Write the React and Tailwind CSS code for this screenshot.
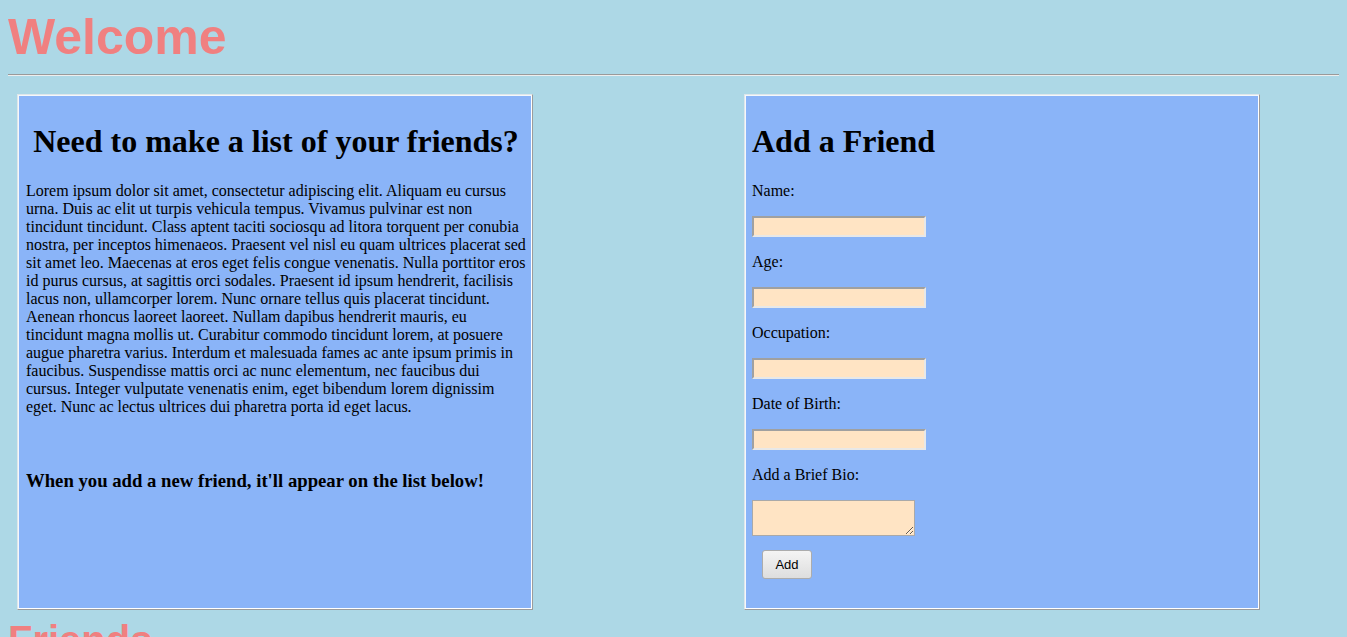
import React from "react";

const serif = "font-['Liberation_Serif','Times_New_Roman',serif]";
const sans = "font-['Liberation_Sans',Arial,sans-serif]";

function Panel({ children, className = "" }) {
  return (
    <div
      className={`box-content w-[500px] h-[500px] p-[7px] border border-t-[#dfe6ea] border-l-[#dfe6ea] border-b-[#9c9c9c] border-r-[#9c9c9c] shadow-[inset_1px_1px_0_#f4f8fb,inset_-1px_-1px_0_#ffffff] bg-[#8AB4F8] shrink-0 ${className}`}
    >
      {children}
    </div>
  );
}

const inputCls =
  "block w-[174px] h-[21px] bg-[#FFE4C4] border-2 border-t-[#a0a0a0] border-l-[#a0a0a0] border-b-[#e8e8e8] border-r-[#e8e8e8] outline-none";

function Field({ label }) {
  return (
    <>
      <p className="mt-4 mb-4 text-[16px] leading-[18px] text-black">{label}</p>
      <input type="text" className={inputCls} />
    </>
  );
}

export default function App() {
  return (
    <div className={`min-h-screen bg-[#ADD8E6] px-2 pt-[9px] ${serif}`}>
      <div className={`${sans} font-bold text-[50px] leading-[57px] text-[#F08080]`}>
        Welcome
      </div>
      <hr className="mt-[8px] h-0 border-t border-b border-t-[#9a9a9a] border-b-[#eeeeee]" />

      <div className="flex mt-[18px]">
        <Panel className="ml-[9px]">
          <h1 className="mt-[21.44px] mb-[21.44px] pl-px -mr-px text-[32px] leading-[37px] font-bold text-center text-black">
            Need to make a list of your friends?
          </h1>
          <p className="pl-px -mr-px text-[16px] leading-[18px] text-black">
            Lorem ipsum dolor sit amet, consectetur adipiscing elit. Aliquam eu cursus urna. Duis ac elit ut turpis vehicula tempus. Vivamus pulvinar est non tincidunt tincidunt. Class aptent taciti sociosqu ad litora torquent per conubia nostra, per inceptos himenaeos. Praesent vel nisl eu quam ultrices placerat sed sit amet leo. Maecenas at eros eget felis congue venenatis. Nulla porttitor eros id purus cursus, at sagittis orci sodales. Praesent id ipsum hendrerit, facilisis lacus non, ullamcorper lorem. Nunc ornare tellus quis placerat tincidunt. Aenean rhoncus laoreet laoreet. Nullam dapibus hendrerit mauris, eu tincidunt magna mollis ut. Curabitur commodo tincidunt lorem, at posuere augue pharetra varius. Interdum et malesuada fames ac ante ipsum primis in faucibus. Suspendisse mattis orci ac nunc elementum, nec faucibus dui cursus. Integer vulputate venenatis enim, eget bibendum lorem dignissim eget. Nunc ac lectus ultrices dui pharetra porta id eget lacus.
          </p>
          <h3 className="mt-[54px] pl-px text-[18.72px] leading-[21px] font-bold text-black">
            When you add a new friend, it'll appear on the list below!
          </h3>
        </Panel>

        <Panel className="ml-[211px]">
          <h1 className="mt-[21.44px] mb-[21.44px] text-[32px] leading-[37px] font-bold text-black">
            Add a Friend
          </h1>
          <p className="mb-4 text-[16px] leading-[18px] text-black">Name:</p>
          <input type="text" className={inputCls} />
          <Field label="Age:" />
          <Field label="Occupation:" />
          <Field label="Date of Birth:" />
          <p className="mt-4 mb-4 text-[16px] leading-[18px] text-black">Add a Brief Bio:</p>
          <textarea className="block w-[163px] h-[36px] bg-[#FFE4C4] border border-[#a9a9a9] outline-none resize" />
          <button
            type="button"
            className={`block mt-[14px] ml-[10px] w-[50px] h-[29px] rounded-[3px] border border-[#acacac] bg-gradient-to-b from-[#f4f4f4] to-[#dedede] text-[13px] text-black ${sans}`}
          >
            Add
          </button>
        </Panel>
      </div>

      <div className={`${sans} font-bold text-[40px] leading-[46px] text-[#F08080] mt-[7px]`}>
        Friends
      </div>
    </div>
  );
}
